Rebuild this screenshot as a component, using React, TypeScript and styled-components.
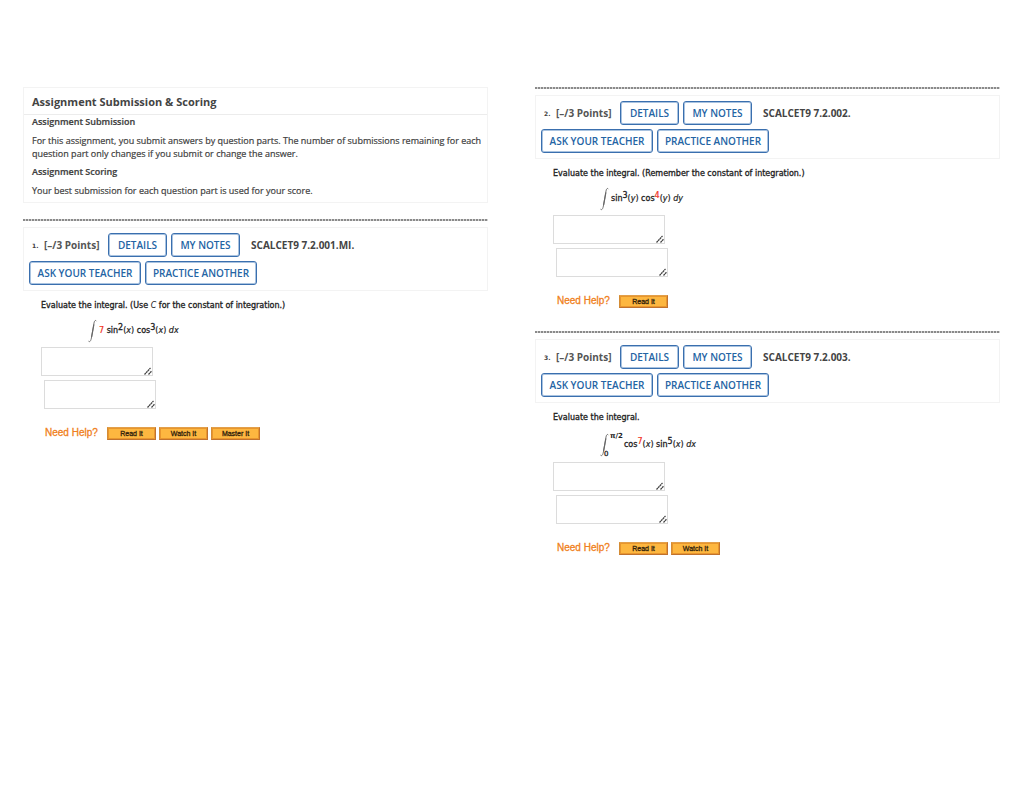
import React from "react";
import styled, { createGlobalStyle } from "styled-components";

const GlobalStyle = createGlobalStyle`
  *, *::before, *::after { box-sizing: border-box; }
  body {
    margin: 0;
    background: #fff;
    color: #404040;
    font-family: "Open Sans", sans-serif;
    font-size: 9px;
  }
`;

const Page = styled.main`
  display: grid;
  grid-template-columns: 1fr 1fr;
  gap: 47px;
  align-items: start;
  padding: 87px 24px 40px 23px;
`;

const Column = styled.div`
  display: flex;
  flex-direction: column;
  gap: 16px;
  min-width: 0;
`;

const SummaryCard = styled.section`
  border: 1px solid #f3f3f3;
`;

const SummaryTitle = styled.h1`
  margin: 0;
  padding: 2px 8px 0;
  border-bottom: 1px solid #ececec;
  font-size: 11px;
  line-height: 24px;
  font-weight: 700;
  color: #444;
`;

const SummaryBody = styled.div`
  padding: 0 2px 0 8px;
`;

const SummaryHeading = styled.h2`
  margin: 0;
  font-size: 9px;
  line-height: 14px;
  font-weight: 600;
  -webkit-text-stroke: 0.2px #404040;
`;

const SummaryText = styled.p`
  margin: 5px 0;
  font-size: 9px;
  line-height: 13px;
  -webkit-text-stroke: 0.2px #404040;
`;

const QuestionBlock = styled.article`
  padding-bottom: 7px;
`;

const Separator = styled.hr`
  height: 2px;
  margin: 0 0 6px;
  border: 0;
  background: repeating-linear-gradient(90deg, #8a8a8a 0 2px, #d4d4d4 2px 3px);
`;

const QuestionHeader = styled.header`
  display: flex;
  flex-direction: column;
  gap: 4px;
  padding: 5px;
  border: 1px solid #f3f3f3;
`;

const HeaderRow = styled.div`
  display: flex;
  align-items: center;
  gap: 4px;
`;

const QuestionNumber = styled.span`
  width: 12px;
  margin-left: 3px;
  font-family: "DejaVu Sans", sans-serif;
  font-size: 6px;
  font-weight: 700;
`;

const Points = styled.span`
  width: 60px;
  margin-left: -4px;
  font-size: 10px;
  font-weight: 700;
  color: #555;
`;

const SourceCode = styled.span`
  margin-left: 7px;
  font-size: 10px;
  font-weight: 700;
  color: #444;
`;

const OutlineButton = styled.button<{ $width: number }>`
  width: ${(p) => p.$width}px;
  height: 24px;
  padding: 0;
  border: 1px solid #3a6fae;
  border-radius: 3px;
  background: #fff;
  box-shadow: inset 0 0 0 1px #a9c3e0;
  color: #2464a4;
  font: 600 10px/20px "Open Sans", sans-serif;
  white-space: nowrap;
  cursor: pointer;
`;

const QuestionBody = styled.div`
  padding: 9px 18px 0;
  font-family: "DejaVu Sans", sans-serif;
  font-size: 8px;
  color: #222;
`;

const Prompt = styled.p`
  margin: 0;
  line-height: 12px;
  -webkit-text-stroke: 0.3px #222;

  i { -webkit-text-stroke: 0; }
`;

const Formula = styled.div<{ $tall?: boolean }>`
  display: flex;
  align-items: center;
  height: ${(p) => (p.$tall ? 38 : 35)}px;
  padding: 3px 0 0 47px;
  white-space: pre;
`;

const Expression = styled.span`
  margin-left: 1px;
  line-height: 12px;
  -webkit-text-stroke: 0.2px;

  sup {
    font-size: 8px;
    line-height: 0;
    vertical-align: 3px;
  }
`;

const Fn = styled.span`
  -webkit-text-stroke: 0.3px #222;
`;

const Red = styled.span`
  color: #f03020;
`;

const Limits = styled.span`
  display: flex;
  flex-direction: column;
  justify-content: space-between;
  height: 26px;
  margin-left: -6px;
  font-size: 7px;
  line-height: 8px;
  -webkit-text-stroke: 0.3px #222;
`;

const UpperLimit = styled.span`
  padding-left: 6px;
  font-weight: 700;
  -webkit-text-stroke: 0;
`;

const AnswerList = styled.div`
  display: flex;
  flex-direction: column;
  gap: 4px;
`;

const AnswerField = styled.label<{ $indent?: boolean }>`
  position: relative;
  display: block;
  width: 112px;
  height: 29px;
  margin-left: ${(p) => (p.$indent ? 3 : 0)}px;
`;

const AnswerInput = styled.textarea`
  display: block;
  width: 100%;
  height: 100%;
  padding: 3px;
  border: 1px solid #dcdcdc;
  background: #fff;
  font: 8px/12px "DejaVu Sans", sans-serif;
  resize: none;
`;

const Grip = styled.svg`
  position: absolute;
  right: 1px;
  bottom: 1px;
  pointer-events: none;
`;

const HelpRow = styled.div`
  display: flex;
  align-items: center;
  gap: 3px;
  height: 14px;
  margin: 17px 0 0 4px;
`;

const HelpLabel = styled.span`
  width: 59px;
  font: 10px/14px "Liberation Sans", sans-serif;
  color: #f08020;
  -webkit-text-stroke: 0.3px #f08020;
  white-space: nowrap;
`;

const HelpButton = styled.button`
  width: 49px;
  height: 13px;
  padding: 0;
  border: 1px solid;
  border-color: #e2a04a #c0722e #c0722e #d48c34;
  background: #fdb740;
  box-shadow: inset 0 0 0 1px #e8962e;
  color: #33230c;
  font: 7px/9px "Liberation Sans", sans-serif;
  -webkit-text-stroke: 0.3px #33230c;
  cursor: pointer;
`;

const Integral = () => (
  <svg width="10" height="24" viewBox="0 0 10 24" fill="none" stroke="#666" aria-hidden="true">
    <path d="M8.4 2.2C7.6.8 6.5 1.4 6 4L3.4 19C2.8 22 1.8 23.4.5 22.2" strokeWidth="0.9" />
    <path d="M5.9 5.5L3.6 18" strokeWidth="1.2" />
  </svg>
);

type AnswerProps = { label: string; indent?: boolean };

const Answer = ({ label, indent }: AnswerProps) => (
  <AnswerField $indent={indent}>
    <AnswerInput aria-label={label} />
    <Grip width="8" height="8" viewBox="0 0 8 8" stroke="#444" strokeWidth="1.2">
      <path d="M0.5 7.5L6.5 1M4.5 7.5L7.5 4.2" strokeDasharray="2 0.4" />
    </Grip>
  </AnswerField>
);

type QuestionProps = {
  number: number;
  source: string;
  prompt: React.ReactNode;
  formula: React.ReactNode;
  tall?: boolean;
  help: string[];
};

const Question = ({ number, source, prompt, formula, tall, help }: QuestionProps) => (
  <QuestionBlock>
    <Separator />
    <QuestionHeader>
      <HeaderRow>
        <QuestionNumber>{number}.</QuestionNumber>
        <Points>[–/3 Points]</Points>
        <OutlineButton $width={59}>DETAILS</OutlineButton>
        <OutlineButton $width={69}>MY NOTES</OutlineButton>
        <SourceCode>{source}</SourceCode>
      </HeaderRow>
      <HeaderRow>
        <OutlineButton $width={112}>ASK YOUR TEACHER</OutlineButton>
        <OutlineButton $width={112}>PRACTICE ANOTHER</OutlineButton>
      </HeaderRow>
    </QuestionHeader>
    <QuestionBody>
      <Prompt>{prompt}</Prompt>
      <Formula $tall={tall}>{formula}</Formula>
      <AnswerList>
        <Answer label={`Question ${number} answer`} />
        <Answer label={`Question ${number} additional answer`} indent />
      </AnswerList>
      <HelpRow>
        <HelpLabel>Need Help?</HelpLabel>
        {help.map((name) => (
          <HelpButton key={name}>{name}</HelpButton>
        ))}
      </HelpRow>
    </QuestionBody>
  </QuestionBlock>
);

export default function App() {
  return (
    <>
      <GlobalStyle />
      <Page>
        <Column>
          <SummaryCard>
            <SummaryTitle>Assignment Submission &amp; Scoring</SummaryTitle>
            <SummaryBody>
              <SummaryHeading>Assignment Submission</SummaryHeading>
              <SummaryText>
                For this assignment, you submit answers by question parts. The number of submissions
                remaining for each question part only changes if you submit or change the answer.
              </SummaryText>
              <SummaryHeading>Assignment Scoring</SummaryHeading>
              <SummaryText>Your best submission for each question part is used for your score.</SummaryText>
            </SummaryBody>
          </SummaryCard>
          <Question
            number={1}
            source="SCALCET9 7.2.001.MI."
            prompt={<>Evaluate the integral. (Use <i>C</i> for the constant of integration.)</>}
            formula={
              <>
                <Integral />
                <Expression>
                  <Red>7</Red> <Fn>sin<sup>2</sup></Fn>(<i>x</i>) <Fn>cos<sup>3</sup></Fn>(<i>x</i>) <i>dx</i>
                </Expression>
              </>
            }
            help={["Read It", "Watch It", "Master It"]}
          />
        </Column>
        <Column>
          <Question
            number={2}
            source="SCALCET9 7.2.002."
            prompt="Evaluate the integral. (Remember the constant of integration.)"
            formula={
              <>
                <Integral />
                <Expression>
                  <Fn>sin<sup>3</sup></Fn>(<i>y</i>) <Fn>cos</Fn><sup><Red>4</Red></sup>(<i>y</i>) <i>dy</i>
                </Expression>
              </>
            }
            help={["Read It"]}
          />
          <Question
            number={3}
            source="SCALCET9 7.2.003."
            prompt="Evaluate the integral."
            tall
            formula={
              <>
                <Integral />
                <Limits>
                  <UpperLimit>π/2</UpperLimit>
                  <span>0</span>
                </Limits>
                <Expression>
                  <Fn>cos</Fn><sup><Red>7</Red></sup>(<i>x</i>) <Fn>sin<sup>5</sup></Fn>(<i>x</i>) <i>dx</i>
                </Expression>
              </>
            }
            help={["Read It", "Watch It"]}
          />
        </Column>
      </Page>
    </>
  );
}
